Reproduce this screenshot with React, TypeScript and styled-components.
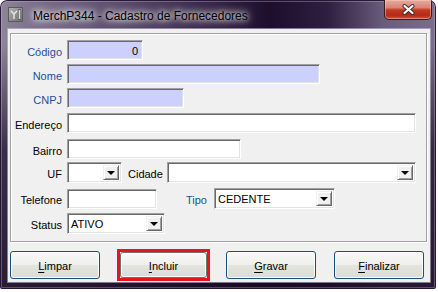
import React from 'react';
import styled, { createGlobalStyle } from 'styled-components';

const GlobalStyle = createGlobalStyle`
  html, body {
    margin: 0;
    padding: 0;
    background: #ffffff;
  }
  body {
    font-family: "Liberation Sans", Arial, sans-serif;
    font-size: 11px;
    color: #000;
  }
`;

const Window = styled.div`
  width: 436px;
  height: 289px;
  border-radius: 7px 7px 2px 2px;
  display: flex;
  flex-direction: column;
  background:
    linear-gradient(180deg, rgba(20, 8, 32, 0) 0px, rgba(20, 8, 32, 0) 45px, rgba(24, 10, 36, 0.7) 150px, rgba(24, 10, 36, 0.85) 100%),
    linear-gradient(90deg, #8e8699 0%, #7a6e8a 8%, #3a2a4c 45%, #1e0e2c 62%, #2e1e40 75%, #6a5c7c 88%, #7a6e8c 100%);
  box-shadow: inset 0 0 0 1px rgba(30, 15, 45, 0.9), inset 0 0 0 2px rgba(200, 190, 215, 0.35);
  overflow: hidden;
`;

const TitleBar = styled.div`
  height: 29px;
  display: flex;
  align-items: flex-start;
  padding-left: 8px;
  flex-shrink: 0;
`;

const AppIcon = styled.svg`
  width: 15px;
  height: 15px;
  margin-top: 7px;
  flex-shrink: 0;
`;

const Title = styled.span`
  margin-left: 10px;
  margin-top: 9px;
  font-family: "Liberation Sans", Arial, sans-serif;
  font-size: 12px;
  line-height: 14px;
  color: #000;
  text-shadow: 0 0 5px #fff, 0 0 9px rgba(255, 255, 255, 0.9), 0 0 14px rgba(255, 255, 255, 0.7);
`;

const CloseButton = styled.div`
  margin-left: auto;
  margin-right: 4px;
  width: 48px;
  height: 20px;
  box-sizing: border-box;
  border: 1px solid #3a1a1e;
  border-top: none;
  border-radius: 0 0 5px 5px;
  background: linear-gradient(180deg, #e4aca0 0%, #d98474 40%, #c43a22 52%, #b42a16 80%, #cc5238 100%);
  box-shadow: inset 0 0 0 1px rgba(255, 210, 200, 0.45);
  display: flex;
  align-items: center;
  justify-content: center;
`;

const Client = styled.div`
  margin: 0 6px 0 8px;
  height: 253px;
  background: #f0f0f0;
  box-shadow: 0 0 0 1px rgba(210, 200, 225, 0.55);
  display: flex;
  flex-direction: column;
  padding: 4px 3px 0 2px;
  box-sizing: border-box;
`;

const Panel = styled.div`
  height: 209px;
  box-sizing: border-box;
  border: 1px solid #a0a0a0;
  box-shadow: inset 1px 1px 0 #ffffff, 1px 1px 0 #ffffff;
  padding-top: 6px;
  display: flex;
  flex-direction: column;
`;

const Row = styled.div<{ $top: number }>`
  display: flex;
  align-items: center;
  margin-top: ${p => p.$top}px;
`;

const Label = styled.span<{ $blue?: boolean; $width?: number; $gap?: number; $lead?: number }>`
  width: ${p => (p.$width ? `${p.$width}px` : 'auto')};
  margin-left: ${p => p.$lead ?? 0}px;
  margin-right: ${p => p.$gap ?? 5}px;
  text-align: right;
  padding-top: 3px;
  color: ${p => (p.$blue ? '#1e4f98' : '#000')};
  white-space: nowrap;
`;

const Field = styled.div<{ $width: number; $fill?: string; $right?: boolean }>`
  width: ${p => p.$width}px;
  height: 20px;
  box-sizing: border-box;
  background: ${p => p.$fill ?? '#ffffff'};
  border: 1px solid;
  border-color: #a0a0a0 #ffffff #ffffff #a0a0a0;
  box-shadow: inset 1px 1px 0 #696969, inset -1px -1px 0 #e3e3e3;
  display: flex;
  align-items: center;
  justify-content: ${p => (p.$right ? 'flex-end' : 'flex-start')};
  padding: 1px 4px 0 3px;
`;

const Combo = styled.div<{ $width: number }>`
  width: ${p => p.$width}px;
  height: 21px;
  box-sizing: border-box;
  background: #ffffff;
  border: 1px solid;
  border-color: #a0a0a0 #ffffff #ffffff #a0a0a0;
  box-shadow: inset 1px 1px 0 #696969, inset -1px -1px 0 #e3e3e3;
  display: flex;
  align-items: center;
  padding: 2px 2px 2px 3px;
`;

const ComboText = styled.span`
  flex: 1;
  padding-top: 1px;
`;

const ArrowBox = styled.div`
  width: 16px;
  height: 100%;
  box-sizing: border-box;
  background: #f0f0f0;
  border: 1px solid;
  border-color: #f0f0f0 #696969 #696969 #f0f0f0;
  box-shadow: inset 1px 1px 0 #ffffff, inset -1px -1px 0 #a0a0a0;
  display: flex;
  align-items: center;
  justify-content: center;
`;

const Arrow = styled.span`
  width: 0;
  height: 0;
  border-left: 4px solid transparent;
  border-right: 4px solid transparent;
  border-top: 4px solid #000;
`;

const ButtonBar = styled.div`
  display: flex;
  align-items: center;
  gap: 18px;
  margin-top: 9px;
  height: 28px;
`;

const Marker = styled.div`
  width: 93px;
  height: 32px;
  box-sizing: border-box;
  border: 3px solid #e8141c;
  margin: 0 -2px 0 -1px;
  display: flex;
  flex-shrink: 0;
`;

const Button = styled.div<{ $default?: boolean; $fill?: boolean }>`
  width: ${p => (p.$fill ? '100%' : '90px')};
  height: ${p => (p.$fill ? '100%' : '28px')};
  flex-shrink: 0;
  box-sizing: border-box;
  border: 1px solid ${p => (p.$default ? '#1b4c7e' : '#707070')};
  border-radius: 3px;
  background: linear-gradient(180deg, #f8f8f6 0%, #efefec 48%, #e4e4de 52%, #dcdcd6 100%);
  box-shadow: inset 0 0 0 1px rgba(255, 255, 255, 0.85);
  display: flex;
  align-items: center;
  justify-content: center;
  font-size: 11px;
  padding-top: 1px;

  u {
    text-underline-offset: 2px;
  }
`;

const Arrowed: React.FC<{ text?: string }> = ({ text }) => (
  <>
    <ComboText>{text}</ComboText>
    <ArrowBox>
      <Arrow />
    </ArrowBox>
  </>
);

export default function App() {
  return (
    <>
      <GlobalStyle />
      <Window>
        <TitleBar>
          <AppIcon viewBox="0 0 15 15">
            <defs>
              <linearGradient id="ic" x1="0" y1="0" x2="1" y2="1">
                <stop offset="0" stopColor="#b4b4b4" />
                <stop offset="1" stopColor="#6c6c6c" />
              </linearGradient>
            </defs>
            <rect x="0.5" y="0.5" width="14" height="14" fill="url(#ic)" stroke="#5a5a5a" />
            <path d="M3 4 L6 7 L6 12 M6 7 L9 4" stroke="#e8e8e8" strokeWidth="1.4" fill="none" />
            <rect x="10" y="2" width="3" height="11" fill="#5e5e5e" />
            <rect x="10.7" y="3" width="1.6" height="9" fill="#d8d8d8" />
          </AppIcon>
          <Title>MerchP344 - Cadastro de Fornecedores</Title>
          <CloseButton>
            <svg width="13" height="11" viewBox="0 0 13 11">
              <path d="M2.5 2 L10.5 9 M10.5 2 L2.5 9" stroke="#3a2a2a" strokeWidth="4" strokeLinecap="round" />
              <path d="M2.5 2 L10.5 9 M10.5 2 L2.5 9" stroke="#ffffff" strokeWidth="2.2" strokeLinecap="round" />
            </svg>
          </CloseButton>
        </TitleBar>
        <Client>
          <Panel>
            <Row $top={0}>
              <Label $blue $width={51}>Código</Label>
              <Field $width={76} $fill="#ccd0ff" $right>0</Field>
            </Row>
            <Row $top={4}>
              <Label $blue $width={51}>Nome</Label>
              <Field $width={253} $fill="#ccd0ff" />
            </Row>
            <Row $top={4}>
              <Label $blue $width={51}>CNPJ</Label>
              <Field $width={117} $fill="#ccd0ff" />
            </Row>
            <Row $top={5}>
              <Label $width={51}>Endereço</Label>
              <Field $width={349} />
            </Row>
            <Row $top={6}>
              <Label $width={51}>Bairro</Label>
              <Field $width={174} />
            </Row>
            <Row $top={3}>
              <Label $width={51}>UF</Label>
              <Combo $width={55}>
                <Arrowed />
              </Combo>
              <Label $gap={4} $lead={6}>Cidade</Label>
              <Combo $width={249}>
                <Arrowed />
              </Combo>
            </Row>
            <Row $top={5}>
              <Label $width={51}>Telefone</Label>
              <Field $width={90} />
              <Label $blue $gap={7} $lead={29}>Tipo</Label>
              <Combo $width={121}>
                <Arrowed text="CEDENTE" />
              </Combo>
            </Row>
            <Row $top={4}>
              <Label $width={51}>Status</Label>
              <Combo $width={98}>
                <Arrowed text="ATIVO" />
              </Combo>
            </Row>
          </Panel>
          <ButtonBar>
            <Button $default><span><u>L</u>impar</span></Button>
            <Marker>
              <Button $fill><span><u>I</u>ncluir</span></Button>
            </Marker>
            <Button $default><span><u>G</u>ravar</span></Button>
            <Button $default><span><u>F</u>inalizar</span></Button>
          </ButtonBar>
        </Client>
      </Window>
    </>
  );
}
